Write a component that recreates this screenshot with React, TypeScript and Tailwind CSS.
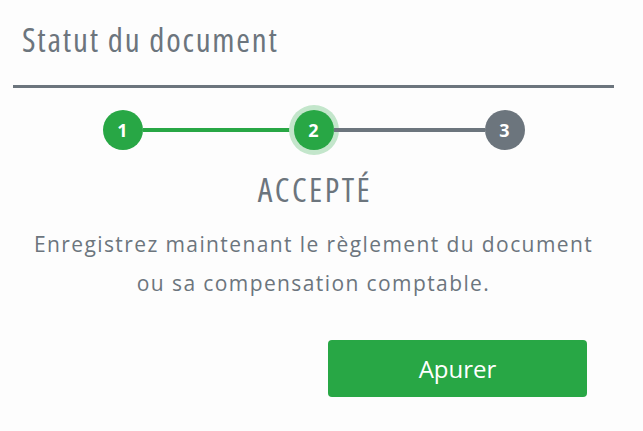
function Step({ n, state }: { n: number; state: "done" | "current" | "todo" }) {
  const color = state === "todo" ? "bg-[#6c757d]" : "bg-[#28a745]";
  const ring = state === "current" ? "ring-[5px] ring-[#c3e6cb]" : "";
  return (
    <div
      className={`flex h-10 w-10 shrink-0 items-center justify-center rounded-full text-[18px] font-bold text-white ${color} ${ring}`}
    >
      {n}
    </div>
  );
}

export default function App() {
  return (
    <div className="min-h-screen bg-[#fdfdfd] font-['Open_Sans',sans-serif] text-[#6c757d]">
      <div className="ml-[13px] w-[601px]">
        {/* Header */}
        <div className="border-b-[3px] border-[#6c757d] pb-[25px] pl-[9px] pt-[20px]">
          <h2 className="text-[33px] leading-[40px] tracking-[1.8px] font-stretch-condensed">Statut du document</h2>
        </div>

        {/* Stepper */}
        <div className="mx-auto mt-[22px] flex w-[422px] items-center">
          <Step n={1} state="done" />
          <div className="h-1 flex-1 bg-[#28a745]" />
          <Step n={2} state="current" />
          <div className="h-1 flex-1 bg-[#6c757d]" />
          <Step n={3} state="todo" />
        </div>

        <div className="mt-[20px] pl-[3px] text-center text-[33px] leading-[40px] tracking-[2.5px] font-stretch-condensed">
          ACCEPTÉ
        </div>

        <p className="mt-[15px] text-center text-[21px] leading-[39px] tracking-[1.4px]">
          Enregistrez maintenant le règlement du document
          <br />
          ou sa compensation comptable.
        </p>

        <div className="mt-[37px] pl-[315px]">
          <button className="flex h-[57px] w-[259px] items-center justify-center rounded-[4px] bg-[#28a745] text-[24px] text-white">
            Apurer
          </button>
        </div>
      </div>
    </div>
  );
}
